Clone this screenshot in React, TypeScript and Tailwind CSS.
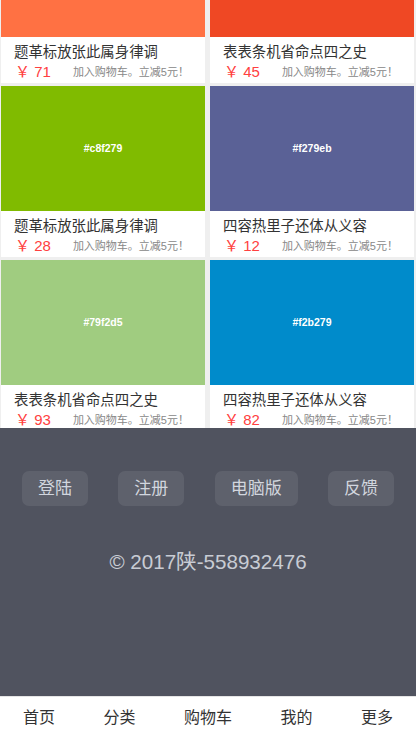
import React from "react";

type Item = { title: string; price: number; bg: string; label: string };

const items: Item[] = [
  { title: "题革标放张此属身律调", price: 71, bg: "bg-[#ff7143]", label: "" },
  { title: "表表条机省命点四之史", price: 45, bg: "bg-[#ef4824]", label: "" },
  { title: "题革标放张此属身律调", price: 28, bg: "bg-[#80bb00]", label: "#c8f279" },
  { title: "四容热里子还体从义容", price: 12, bg: "bg-[#5a6196]", label: "#f279eb" },
  { title: "表表条机省命点四之史", price: 93, bg: "bg-[#a0cc80]", label: "#79f2d5" },
  { title: "四容热里子还体从义容", price: 82, bg: "bg-[#008bcb]", label: "#f2b279" },
];

const Card: React.FC<{ item: Item; first: boolean }> = ({ item, first }) => (
  <div className="bg-white">
    <div
      className={`${item.bg} ${first ? "h-[37px]" : "h-[125px]"} flex items-center justify-center`}
    >
      {item.label && (
        <span className="text-[10.5px] font-bold text-white">{item.label}</span>
      )}
    </div>
    <div className="h-[46px] pt-[5px] pl-[13px] pr-[16px]">
      <div className="text-[14.4px] leading-[20px] text-[#333] whitespace-nowrap">
        {item.title}
      </div>
      <div className="flex items-center justify-between leading-[20px]">
        <span className="ml-[1px] text-[15px] text-[#ff4040] whitespace-pre">￥ {item.price}</span>
        <span className="text-[11px] text-[#888]">加入购物车。立减5元！</span>
      </div>
    </div>
  </div>
);

const App: React.FC = () => {
  return (
    <div
      className="w-[416px] h-[738px] overflow-hidden flex flex-col bg-[#efefef]"
      style={{ fontFamily: '"Liberation Sans", "Noto Sans CJK SC", sans-serif' }}
    >
      <div className="grid grid-cols-2 gap-x-[5px] gap-y-[3px] pl-[1px] pr-[2px] h-[428px] overflow-hidden">
        {items.map((it, i) => (
          <Card key={i} item={it} first={i < 2} />
        ))}
      </div>
      <footer className="h-[268px] bg-[#50535f] flex flex-col">
        <div className="flex justify-between px-[22px] pt-[43px]">
          {["登陆", "注册", "电脑版", "反馈"].map((t) => (
            <button
              key={t}
              className="h-[35px] px-[16px] rounded-[7px] bg-[#5e616c] text-[17px] text-[#d2d6de]"
            >
              {t}
            </button>
          ))}
        </div>
        <div className="mt-[41px] text-center text-[20.6px] text-[#c8ccd4]">
          © 2017陕-558932476
        </div>
      </footer>
      <nav className="h-[42px] bg-white border-t border-[#e5e5e5] flex items-center justify-between px-[23px] text-[16px] text-[#333]">
        <span>首页</span>
        <span>分类</span>
        <span>购物车</span>
        <span>我的</span>
        <span>更多</span>
      </nav>
    </div>
  );
};

export default App;
